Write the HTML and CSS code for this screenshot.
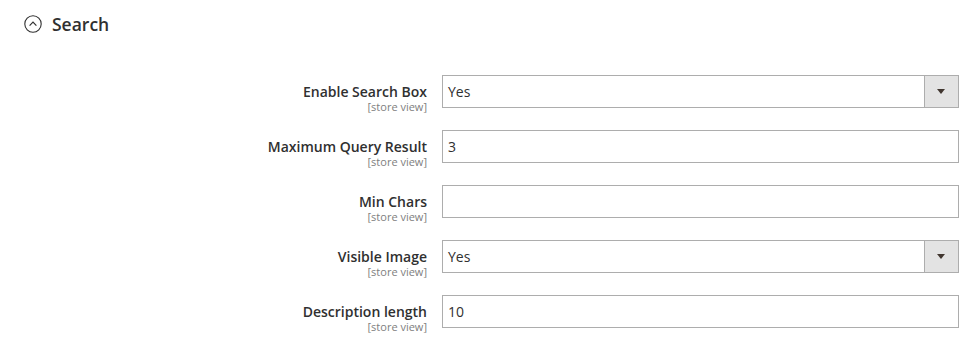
FILE: index.html
```html
<!DOCTYPE html>
<html lang="en">
<head>
    <meta charset="UTF-8">
    <title>Search - Configuration</title>
    <link rel="stylesheet" href="styles.css">
</head>
<body>
    <div class="section">
        <div class="section-title">
            <span class="toggle-icon">
                <svg width="18" height="18" viewBox="0 0 18 18">
                    <circle cx="9" cy="9" r="8.2" fill="none" stroke="#303030" stroke-width="1.1"/>
                    <path d="M5.6 10.6 L9 7.2 L12.4 10.6" fill="none" stroke="#303030" stroke-width="1.2"/>
                </svg>
            </span>
            Search
        </div>

        <div class="fields">
            <div class="field">
                <div class="label">
                    <span>Enable Search Box</span>
                    <span class="scope">[store view]</span>
                </div>
                <div class="control">
                    <div class="select">
                        <span class="value">Yes</span>
                        <span class="arrow"></span>
                    </div>
                </div>
            </div>

            <div class="field">
                <div class="label">
                    <span>Maximum Query Result</span>
                    <span class="scope">[store view]</span>
                </div>
                <div class="control">
                    <input class="input-text" type="text" value="3">
                </div>
            </div>

            <div class="field">
                <div class="label">
                    <span>Min Chars</span>
                    <span class="scope">[store view]</span>
                </div>
                <div class="control">
                    <input class="input-text" type="text" value="">
                </div>
            </div>

            <div class="field">
                <div class="label">
                    <span>Visible Image</span>
                    <span class="scope">[store view]</span>
                </div>
                <div class="control">
                    <div class="select">
                        <span class="value">Yes</span>
                        <span class="arrow"></span>
                    </div>
                </div>
            </div>

            <div class="field">
                <div class="label">
                    <span>Description length</span>
                    <span class="scope">[store view]</span>
                </div>
                <div class="control">
                    <input class="input-text" type="text" value="10">
                </div>
            </div>
        </div>
    </div>
</body>
</html>
```

FILE: styles.css
```css
* {
    margin: 0;
    padding: 0;
    box-sizing: border-box;
}

body {
    font-family: 'Open Sans', 'Noto Sans', sans-serif;
    background: #ffffff;
    color: #303030;
}

.section {
    padding: 0 19px 10px 24px;
}

.section-title {
    display: flex;
    align-items: center;
    height: 48px;
    padding-bottom: 1px;
    font-size: 17.5px;
    font-weight: 600;
    color: #303030;
}

.toggle-icon {
    display: flex;
    width: 18px;
    height: 18px;
    margin-right: 10px;
}

.fields {
    display: flex;
    flex-direction: column;
    gap: 22px;
    padding-top: 27px;
}

.field {
    display: grid;
    grid-template-columns: 1fr 517px;
    grid-template-rows: 33px;
    column-gap: 15px;
    height: 33px;
}

.label {
    display: flex;
    flex-direction: column;
    align-items: flex-end;
    align-self: start;
    padding-top: 9px;
    font-size: 14px;
    font-weight: 600;
    line-height: 16px;
    text-align: right;
}

.label span {
    display: block;
    flex-shrink: 0;
}

.label .scope {
    font-size: 11px;
    font-weight: 400;
    line-height: 13px;
    color: #808080;
}

.input-text,
.select {
    display: flex;
    align-items: center;
    width: 100%;
    height: 33px;
    border: 1px solid #adadad;
    background: #ffffff;
    font-family: inherit;
    font-size: 14px;
    color: #303030;
    padding: 0 5px;
}

.select {
    padding-right: 0;
}

.select .value {
    flex: 1;
}

.select .arrow {
    position: relative;
    width: 34px;
    height: 100%;
    background: #e3e3e3;
    border-left: 1px solid #adadad;
}

.select .arrow::after {
    content: "";
    position: absolute;
    left: 12px;
    top: 13px;
    border-left: 4.5px solid transparent;
    border-right: 4.5px solid transparent;
    border-top: 5px solid #41362f;
}
```
